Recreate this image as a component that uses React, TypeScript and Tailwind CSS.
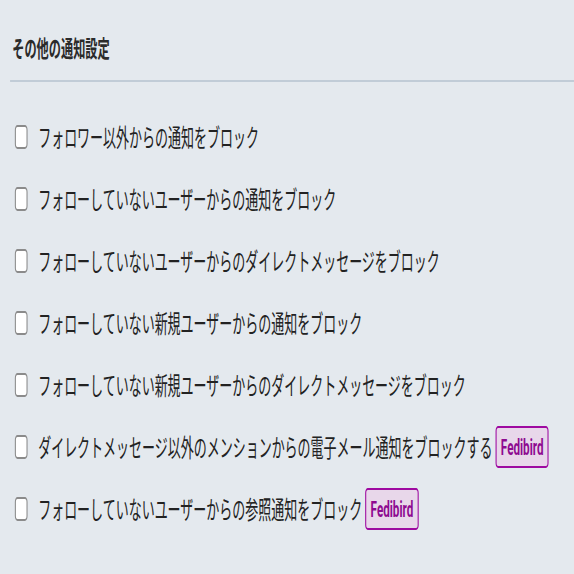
const rows: { label: string; badge?: boolean }[] = [
  { label: 'フォロワー以外からの通知をブロック' },
  { label: 'フォローしていないユーザーからの通知をブロック' },
  { label: 'フォローしていないユーザーからのダイレクトメッセージをブロック' },
  { label: 'フォローしていない新規ユーザーからの通知をブロック' },
  { label: 'フォローしていない新規ユーザーからのダイレクトメッセージをブロック' },
  {
    label: 'ダイレクトメッセージ以外のメンションからの電子メール通知をブロックする',
    badge: true,
  },
  { label: 'フォローしていないユーザーからの参照通知をブロック', badge: true },
]

function Checkbox() {
  return (
    <div className="w-[24px] h-[24px] shrink-0 rounded-[5px] border-2 border-[#8b8b8b] bg-white" />
  )
}

export default function App() {
  return (
    <div className="w-[574px] h-[574px] overflow-hidden bg-[#e4e9ee]">
      {/* the whole screen is squeezed horizontally */}
      <div
        className="w-[1083px] origin-top-left scale-x-[0.53] pl-[19px] text-[#222]"
        style={{ fontFamily: '"Noto Sans CJK JP", "Noto Sans", sans-serif' }}
      >
        <h2 className="pt-[32px] pl-[4px] text-[23px] leading-[30px] font-bold text-[#2b2b2b]">
          その他の通知設定
        </h2>
        <div className="mt-[18px] h-[2px] bg-[#c1ccd7]" />
        <div className="mt-[24px] flex flex-col">
          {rows.map((row) => (
            <div key={row.label} className="h-[62px] flex items-center pl-[9px]">
              <Checkbox />
              <span className="ml-[20px] text-[24.5px] leading-[30px] whitespace-nowrap">
                {row.label}
              </span>
              {row.badge && (
                <span
                  className="ml-[6px] h-[42px] px-[8px] flex items-center rounded-[5px] border-2 border-[#9e0aa0] bg-[#e8d7ea] text-[22px] font-bold text-[#8e0a90]"
                  style={{ fontFamily: 'Roboto, "Liberation Sans", sans-serif' }}
                >
                  Fedibird
                </span>
              )}
            </div>
          ))}
        </div>
      </div>
    </div>
  )
}
